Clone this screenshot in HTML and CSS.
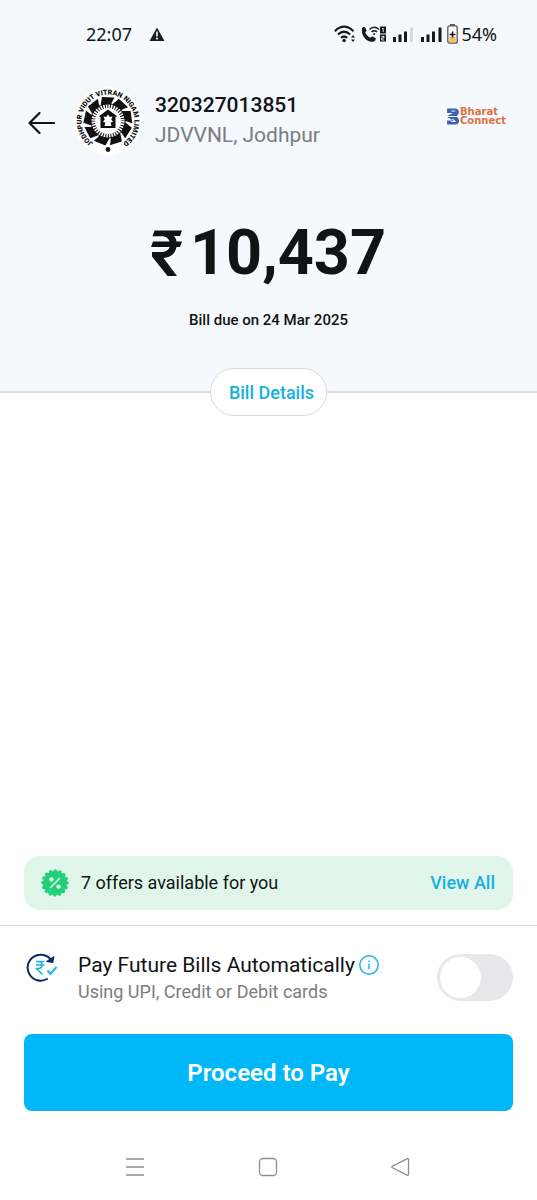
FILE: index.html
```html
<!DOCTYPE html>
<html lang="en">
<head>
<meta charset="utf-8">
<meta name="viewport" content="width=device-width, initial-scale=1">
<title>Bill payment</title>
<link rel="stylesheet" href="styles.css">
</head>
<body>
<div class="screen">
  <section class="hero">
    <div class="status">
      <span>22:07</span>
      <svg class="alert" width="16" height="14" viewBox="0 0 16 14"><path d="M8 .5 15.500 14H.5z" fill="#191b1d"/><path d="M8 4.500v5M8 10.500v2" stroke="#f5f8fd" stroke-width="1.600"/></svg>
      <div class="signals">
        <svg width="120" height="22" viewBox="0 0 120 22">
          <g fill="none" stroke="#17191b" stroke-width="2.200">
            <path d="M.8 8.200Q10-.8 19.500 8.200M4 11.500q6-5.500 12.200 0M7 14.800q3-2.600 6.200 0"/>
            <path d="M35.500 6.500q4.500-4.500 9.500 0M37.500 9q2.700-2.500 5.500 0" stroke-width="1.500"/>
          </g>
          <circle cx="10.100" cy="17.500" r="1.700" fill="#17191b"/>
          <path d="m17 14.500 2-2.500 2 2.500zm0 2 2 2.500 2-2.500z" fill="#17191b"/>
          <path d="M28 5.500c1-2 3-1.800 3.500-.5l1 2.600c.2 1-1.500 1.600-1 2.500 1 2 2.200 3.400 4.200 4.500 1 .4 1.600-1.300 2.600-1l2.600 1.200c1.500.7 1 2.800-1 3.700C33 20.500 26.500 12 28 5.500z" fill="#17191b"/>
          <circle cx="40.200" cy="11" r="1" fill="#17191b"/>
          <path d="M46 3.500h6v7h-6zM46 11.500h6v7h-6z" fill="#17191b"/>
          <path d="M48 5.500h1.200v3.500M47.500 13.500h2.500v1.500h-2.300v2h2.500" fill="none" stroke="#f5f8fd" stroke-width=".9"/>
          <path d="M59 14h3v5h-3zM64.500 11.500h3V19h-3zM70 8.500h3V19h-3z" fill="#17191b"/>
          <path d="M76 4.500h3V19h-3z" fill="#d5d8dd"/>
          <path d="M87 14h3v5h-3zM92.500 11.500h3V19h-3zM98 8.500h3V19h-3zM104.500 4.500h3V19h-3z" fill="#17191b"/>
        </svg>
        <svg width="11" height="22" viewBox="0 0 11 22"><path d="M3 1h5v2H3z" fill="#555"/><rect x=".8" y="2.800" width="9.400" height="17.400" rx="2" fill="#fff" stroke="#555" stroke-width="1.300"/><path d="M2.200 14h6.600v5H2.200z" fill="#f5bd4f"/><path d="M5.500 8.500v6M2.500 11.500h6" stroke="#17191b" stroke-width="1.600"/></svg>
        <span>54%</span>
      </div>
    </div>

    <header class="biller">
      <button class="back" type="button" aria-label="Back"><svg width="27" height="22" viewBox="0 0 27 22"><path d="M26 11H1.500M11.500 1 1.500 11l10 10" fill="none" stroke="#111315" stroke-width="2.200" stroke-linecap="round" stroke-linejoin="round"/></svg></button>
      <svg class="seal" width="68" height="68" viewBox="-34 -34 68 68">
        <defs>
          <path id="ring" d="M-14.600 22A26.400 26.400 0 1 1 14.600 22"/>
          <path id="blade" d="M-8-12-6-24 6.500-23.500 3.500-18 5-11z"/>
        </defs>
        <circle r="34" fill="#fff"/>
        <g fill="#111">
          <use href="#blade"/><use href="#blade" transform="rotate(40)"/><use href="#blade" transform="rotate(80)"/><use href="#blade" transform="rotate(120)"/><use href="#blade" transform="rotate(160)"/><use href="#blade" transform="rotate(200)"/><use href="#blade" transform="rotate(240)"/><use href="#blade" transform="rotate(280)"/><use href="#blade" transform="rotate(320)"/>
        </g>
        <text class="seal-text"><textPath href="#ring">JODHPUR VIDUT VITRAN NIGAM LIMITED</textPath></text>
        <circle cy="28.500" r="2.400" fill="#111"/>
        <circle r="14.500" fill="none" stroke="#fff" stroke-width="4" stroke-dasharray="1.500 1.030"/>
        <circle r="13" fill="#fff"/>
        <path d="M0-11.500 9.500-4.500H7.500V7H-7.500V-4.500H-9.500z" fill="#111"/>
        <path d="M0-6.500 1.800-4 4.500-4.500 3.300-1.500 5 1 2.600 1.500 3.500 5H-3.500L-2.600 1.500-5 1-3.300-1.500-4.500-4.500-1.800-4z" fill="#fff"/>
      </svg>
      <div class="biller-text">
        <h1>320327013851</h1>
        <p>JDVVNL, Jodhpur</p>
      </div>
      <div class="bharat">
        <svg width="14" height="17" viewBox="0 0 13 17" preserveAspectRatio="none"><path d="M1 .5h7.500c4 0 4.500 5.500 1.500 7.500H1L6.500 5H1z" fill="#3c62ae"/><path d="M1 9h9c3.500 2 2.500 7.500-1.500 7.500H1v-4h5.500z" fill="#3c62ae"/><path d="M5 3h3.500M5 13.500h3.500L6 11" fill="none" stroke="#f5f8fd" stroke-width="1"/></svg>
        <div class="bharat-name"><span>Bharat</span><span>Connect</span></div>
      </div>
    </header>

    <div class="amount"><svg width="31" height="46" viewBox="0 0 31 46"><path d="M3.500.5H31l-2 5.500h-6q2 2.300 2.500 5.500H31l-2 5.500h-3.500C24 24 19.500 27.500 12.500 28L26 46H16.500L1 26.500V22h9c4.500 0 7.500-1.600 8.500-5H0l2-5.500h16.500C17.500 8 14.500 6.300 10 6.300H1.500z" fill="#111315"/></svg><span>10,437</span></div>
    <p class="due">Bill due on 24 Mar 2025</p>
  </section>

  <button class="details" type="button">Bill Details</button>

  <main class="bottom">
    <div class="offers">
      <svg width="28" height="28" viewBox="-14 -14 28 28"><circle r="12" fill="#22d07a"/><circle r="12" fill="none" stroke="#22d07a" stroke-width="3.600" stroke-linecap="round" stroke-dasharray="0 4.712"/><path d="M4.500-4.500-4.500 4.500" stroke="#e1f6ea" stroke-width="1.500" stroke-linecap="round"/><circle cx="-3.500" cy="-3.600" r="2.200" fill="#e1f6ea"/><circle cx="3.600" cy="3.600" r="2.200" fill="#e1f6ea"/></svg>
      <span>7 offers available for you</span>
      <a href="#offers">View All</a>
    </div>
    <hr>
    <div class="autopay">
      <svg class="autopay-icon" width="32" height="30" viewBox="0 0 32 30"><g fill="none" stroke-width="2"><path d="M25.500 7.500A13 13 0 1 0 21 26" stroke="#0b2a6b" stroke-linecap="round"/><path d="M28 3.500 26.800 9.500 20.500 8.500z" fill="#0b2a6b" stroke="#0b2a6b" stroke-width="1"/><path d="M10 8.500h8.500M10 12h8.500M12 8.500c5.500 0 5.500 7 0 7h-1.500l6 6" stroke="#19b4e8" stroke-width="1.500"/><path d="m21.500 17.500 3 3.500 6-7" stroke="#19b4e8"/></g></svg>
      <div class="autopay-text">
        <div class="autopay-title"><label for="autopay">Pay Future Bills Automatically</label>
          <button class="info" type="button" aria-label="More information"><svg width="20" height="20" viewBox="0 0 20 20"><circle cx="10" cy="10" r="9.200" fill="none" stroke="#20b4df" stroke-width="1.500"/><path d="M10 8.500V14M10 5.500v1.600" stroke="#20b4df" stroke-width="1.500"/></svg></button>
        </div>
        <p>Using UPI, Credit or Debit cards</p>
      </div>
      <input class="switch" id="autopay" type="checkbox">
    </div>
    <button class="pay" type="button">Proceed to Pay</button>
  </main>

  <nav class="system-nav">
    <button type="button" aria-label="Recent apps"><svg width="20" height="20" viewBox="0 0 20 20"><path d="M1 2h18M1 10h18M1 18h18" stroke="#8e8e8e" stroke-width="1.500"/></svg></button>
    <button type="button" aria-label="Home"><svg width="20" height="20" viewBox="0 0 20 20"><rect x="1.500" y="1.500" width="17" height="17" rx="3.500" fill="none" stroke="#8e8e8e" stroke-width="1.300"/></svg></button>
    <button type="button" aria-label="Go back"><svg width="20" height="20" viewBox="0 0 20 20"><path d="M17 1.800 2.500 9.200Q1 10 2.500 10.800L17 18.200q1.500.5 1.500-1V2.800q0-1.500-1.500-1z" fill="none" stroke="#8e8e8e" stroke-width="1.300"/></svg></button>
  </nav>
</div>
</body>
</html>
```
FILE: styles.css
```css
* { box-sizing: border-box; }
body {
  margin: 0;
  background: #fff;
  color: #111315;
  font-family: Roboto, "Liberation Sans", sans-serif;
}
h1, p { margin: 0; }
svg { display: block; flex: none; }
button { padding: 0; border: 0; background: none; font: inherit; color: inherit; cursor: pointer; }

.screen {
  display: flex;
  flex-direction: column;
  min-height: 100vh;
}
.hero {
  padding-bottom: 61px;
  background: #f5f8fd;
  border-bottom: 2px solid #dcdde1;
}

.status {
  display: flex;
  align-items: center;
  padding: 21px 40px 0 86px;
  font: 18px/26px "Noto Sans", sans-serif;
}
.alert { margin-left: 17px; }
.signals {
  display: flex;
  align-items: center;
  margin-left: auto;
}
.signals svg:first-child { margin-right: -7px; }
.signals span { margin-left: 3px; }

.biller {
  display: flex;
  align-items: center;
  padding: 40px 27px 0 28px;
}
.back { margin-top: 4px; }
.seal { margin-left: 19px; }
.seal-text { font-size: 7px; font-weight: 900; fill: #111; }
.biller-text { flex: 1; margin: 0 0 2px 13px; }
.biller h1 { font-size: 21px; line-height: 30px; font-weight: 500; }
.biller p { font-size: 21px; line-height: 30px; color: #7a7c80; }
.bharat {
  display: flex;
  align-items: center;
  align-self: flex-start;
  margin-top: 20px;
  color: #e2703f;
  font: 700 10px/9px "DejaVu Sans", sans-serif;
}
.bharat-name { display: grid; width: 50px; }

.amount {
  display: flex;
  align-items: center;
  justify-content: center;
  gap: 8px;
  margin-top: 59px;
  font-size: 63px;
  line-height: 78px;
  font-weight: 700;
}
.due {
  margin-top: 18px;
  font-size: 15px;
  line-height: 20px;
  font-weight: 500;
  text-align: center;
}
.details {
  position: relative;
  align-self: center;
  margin-top: -25px;
  padding: 0 12px 0 18px;
  height: 48px;
  border: 1px solid #d9dbe0;
  border-radius: 24px;
  background: #fff;
  color: #16b0e2;
  font-size: 18px;
  font-weight: 500;
}

.bottom { margin-top: auto; }
.offers {
  display: flex;
  align-items: center;
  gap: 12px;
  margin: 0 24px 15px;
  padding: 13px 18px 13px 17px;
  border-radius: 16px;
  background: #e1f6ea;
  font-size: 18px;
  line-height: 28px;
}
.offers a {
  margin-left: auto;
  color: #16b0e2;
  font-weight: 500;
  text-decoration: none;
}
hr { margin: 0; border: 0; border-top: 1px solid #d9dbdd; }
.autopay {
  display: flex;
  align-items: center;
  padding: 23px 24px 0 26px;
}
.autopay-icon { align-self: flex-start; margin-top: 4px; }
.autopay-text { flex: 1; margin: 2px 0 0 20px; }
.autopay-title {
  display: flex;
  align-items: center;
  gap: 4px;
  font-size: 21px;
  line-height: 28px;
}
.autopay p { font-size: 18px; line-height: 26px; color: #7c7d80; }
.switch {
  appearance: none;
  display: flex;
  flex: none;
  width: 76px;
  height: 47px;
  margin: 0;
  padding: 3px;
  border-radius: 24px;
  background: #e8e8ea;
}
.switch::before {
  content: "";
  width: 41px;
  height: 41px;
  border-radius: 50%;
  background: #fff;
}
.switch:checked { justify-content: flex-end; background: #00b8f8; }
.pay {
  display: block;
  width: calc(100% - 48px);
  height: 77px;
  margin: 29px 24px 0;
  border-radius: 8px;
  background: #00b8f8;
  color: #fff;
  font-size: 24px;
  font-weight: 600;
}
.system-nav {
  display: flex;
  justify-content: space-between;
  padding: 46px 127px 23px 125px;
}
```
